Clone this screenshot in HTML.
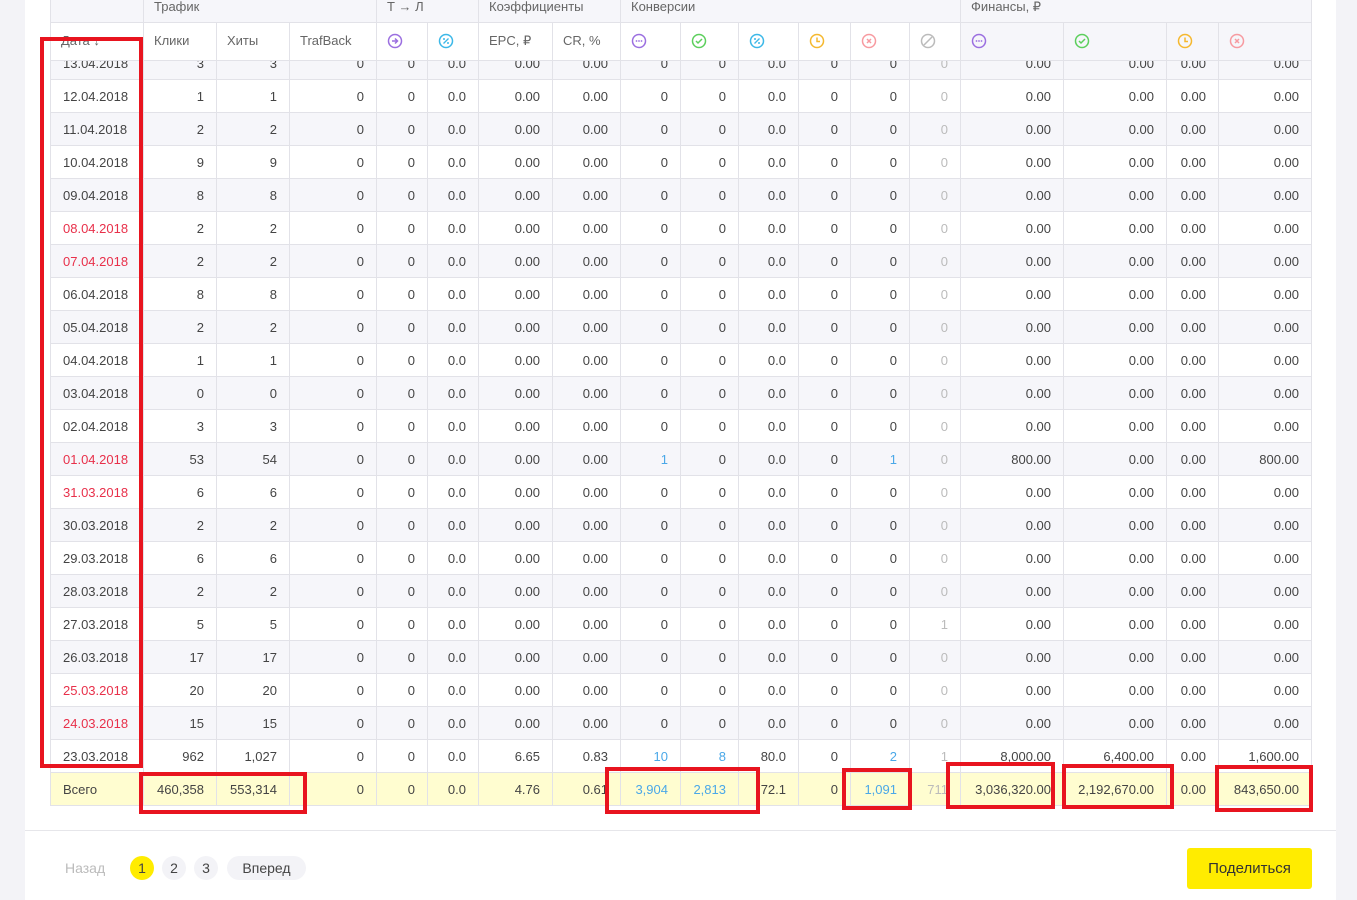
<!DOCTYPE html>
<html><head><meta charset="utf-8"><style>
body{margin:0;width:1357px;height:900px;overflow:hidden;background:#f3f3f7;font-family:"Liberation Sans",sans-serif;font-size:13px;color:#444;position:relative}
.panel{position:absolute;left:25px;top:0;width:1311px;height:900px;background:#fff}
table{border-collapse:collapse;table-layout:fixed;position:absolute;left:50px}
td,th{border:1px solid #e2e2e8;height:32px;padding:0 12px 0 0;text-align:right;white-space:nowrap;overflow:hidden;font-weight:normal}
td:first-child{text-align:left;padding-left:12px}
#data{top:46px}
#data tr:nth-child(odd) td{background:#f6f6fa}
#data tr:nth-child(even) td{background:#fff}
#data tr.tot td{background:#fffdd0}
.r{color:#e8304a}.b{color:#4aa8e8}.g{color:#bbb}
#head{top:-1px;z-index:2}
#head th{text-align:left;padding-left:10px;color:#666;background:#f6f6fa}
#head tr.g1 th{height:22px;vertical-align:top;line-height:14px}
#head tr.g2 th{height:35px;background:#fff;padding-bottom:2px}
#head tr.g2 th.f{background:#f6f6fa}
svg{display:block}
.box{position:absolute;border:4px solid #e8141f;z-index:5}
.pg{position:absolute;top:856px;font-size:14px}
</style></head><body>
<div class="panel"></div>
<div style="position:absolute;left:25px;top:830px;width:1311px;height:1px;background:#e6e6ea"></div>
<table id="data">
<colgroup><col style="width:93px"><col style="width:73px"><col style="width:73px"><col style="width:87px"><col style="width:51px"><col style="width:51px"><col style="width:74px"><col style="width:68px"><col style="width:60px"><col style="width:58px"><col style="width:60px"><col style="width:52px"><col style="width:59px"><col style="width:51px"><col style="width:103px"><col style="width:103px"><col style="width:52px"><col style="width:93px"></colgroup>
<tr><td>13.04.2018</td><td>3</td><td>3</td><td>0</td><td>0</td><td>0.0</td><td>0.00</td><td>0.00</td><td>0</td><td>0</td><td>0.0</td><td>0</td><td>0</td><td class="g">0</td><td>0.00</td><td>0.00</td><td>0.00</td><td>0.00</td></tr>
<tr><td>12.04.2018</td><td>1</td><td>1</td><td>0</td><td>0</td><td>0.0</td><td>0.00</td><td>0.00</td><td>0</td><td>0</td><td>0.0</td><td>0</td><td>0</td><td class="g">0</td><td>0.00</td><td>0.00</td><td>0.00</td><td>0.00</td></tr>
<tr><td>11.04.2018</td><td>2</td><td>2</td><td>0</td><td>0</td><td>0.0</td><td>0.00</td><td>0.00</td><td>0</td><td>0</td><td>0.0</td><td>0</td><td>0</td><td class="g">0</td><td>0.00</td><td>0.00</td><td>0.00</td><td>0.00</td></tr>
<tr><td>10.04.2018</td><td>9</td><td>9</td><td>0</td><td>0</td><td>0.0</td><td>0.00</td><td>0.00</td><td>0</td><td>0</td><td>0.0</td><td>0</td><td>0</td><td class="g">0</td><td>0.00</td><td>0.00</td><td>0.00</td><td>0.00</td></tr>
<tr><td>09.04.2018</td><td>8</td><td>8</td><td>0</td><td>0</td><td>0.0</td><td>0.00</td><td>0.00</td><td>0</td><td>0</td><td>0.0</td><td>0</td><td>0</td><td class="g">0</td><td>0.00</td><td>0.00</td><td>0.00</td><td>0.00</td></tr>
<tr><td class="r">08.04.2018</td><td>2</td><td>2</td><td>0</td><td>0</td><td>0.0</td><td>0.00</td><td>0.00</td><td>0</td><td>0</td><td>0.0</td><td>0</td><td>0</td><td class="g">0</td><td>0.00</td><td>0.00</td><td>0.00</td><td>0.00</td></tr>
<tr><td class="r">07.04.2018</td><td>2</td><td>2</td><td>0</td><td>0</td><td>0.0</td><td>0.00</td><td>0.00</td><td>0</td><td>0</td><td>0.0</td><td>0</td><td>0</td><td class="g">0</td><td>0.00</td><td>0.00</td><td>0.00</td><td>0.00</td></tr>
<tr><td>06.04.2018</td><td>8</td><td>8</td><td>0</td><td>0</td><td>0.0</td><td>0.00</td><td>0.00</td><td>0</td><td>0</td><td>0.0</td><td>0</td><td>0</td><td class="g">0</td><td>0.00</td><td>0.00</td><td>0.00</td><td>0.00</td></tr>
<tr><td>05.04.2018</td><td>2</td><td>2</td><td>0</td><td>0</td><td>0.0</td><td>0.00</td><td>0.00</td><td>0</td><td>0</td><td>0.0</td><td>0</td><td>0</td><td class="g">0</td><td>0.00</td><td>0.00</td><td>0.00</td><td>0.00</td></tr>
<tr><td>04.04.2018</td><td>1</td><td>1</td><td>0</td><td>0</td><td>0.0</td><td>0.00</td><td>0.00</td><td>0</td><td>0</td><td>0.0</td><td>0</td><td>0</td><td class="g">0</td><td>0.00</td><td>0.00</td><td>0.00</td><td>0.00</td></tr>
<tr><td>03.04.2018</td><td>0</td><td>0</td><td>0</td><td>0</td><td>0.0</td><td>0.00</td><td>0.00</td><td>0</td><td>0</td><td>0.0</td><td>0</td><td>0</td><td class="g">0</td><td>0.00</td><td>0.00</td><td>0.00</td><td>0.00</td></tr>
<tr><td>02.04.2018</td><td>3</td><td>3</td><td>0</td><td>0</td><td>0.0</td><td>0.00</td><td>0.00</td><td>0</td><td>0</td><td>0.0</td><td>0</td><td>0</td><td class="g">0</td><td>0.00</td><td>0.00</td><td>0.00</td><td>0.00</td></tr>
<tr><td class="r">01.04.2018</td><td>53</td><td>54</td><td>0</td><td>0</td><td>0.0</td><td>0.00</td><td>0.00</td><td class="b">1</td><td>0</td><td>0.0</td><td>0</td><td class="b">1</td><td class="g">0</td><td>800.00</td><td>0.00</td><td>0.00</td><td>800.00</td></tr>
<tr><td class="r">31.03.2018</td><td>6</td><td>6</td><td>0</td><td>0</td><td>0.0</td><td>0.00</td><td>0.00</td><td>0</td><td>0</td><td>0.0</td><td>0</td><td>0</td><td class="g">0</td><td>0.00</td><td>0.00</td><td>0.00</td><td>0.00</td></tr>
<tr><td>30.03.2018</td><td>2</td><td>2</td><td>0</td><td>0</td><td>0.0</td><td>0.00</td><td>0.00</td><td>0</td><td>0</td><td>0.0</td><td>0</td><td>0</td><td class="g">0</td><td>0.00</td><td>0.00</td><td>0.00</td><td>0.00</td></tr>
<tr><td>29.03.2018</td><td>6</td><td>6</td><td>0</td><td>0</td><td>0.0</td><td>0.00</td><td>0.00</td><td>0</td><td>0</td><td>0.0</td><td>0</td><td>0</td><td class="g">0</td><td>0.00</td><td>0.00</td><td>0.00</td><td>0.00</td></tr>
<tr><td>28.03.2018</td><td>2</td><td>2</td><td>0</td><td>0</td><td>0.0</td><td>0.00</td><td>0.00</td><td>0</td><td>0</td><td>0.0</td><td>0</td><td>0</td><td class="g">0</td><td>0.00</td><td>0.00</td><td>0.00</td><td>0.00</td></tr>
<tr><td>27.03.2018</td><td>5</td><td>5</td><td>0</td><td>0</td><td>0.0</td><td>0.00</td><td>0.00</td><td>0</td><td>0</td><td>0.0</td><td>0</td><td>0</td><td class="g">1</td><td>0.00</td><td>0.00</td><td>0.00</td><td>0.00</td></tr>
<tr><td>26.03.2018</td><td>17</td><td>17</td><td>0</td><td>0</td><td>0.0</td><td>0.00</td><td>0.00</td><td>0</td><td>0</td><td>0.0</td><td>0</td><td>0</td><td class="g">0</td><td>0.00</td><td>0.00</td><td>0.00</td><td>0.00</td></tr>
<tr><td class="r">25.03.2018</td><td>20</td><td>20</td><td>0</td><td>0</td><td>0.0</td><td>0.00</td><td>0.00</td><td>0</td><td>0</td><td>0.0</td><td>0</td><td>0</td><td class="g">0</td><td>0.00</td><td>0.00</td><td>0.00</td><td>0.00</td></tr>
<tr><td class="r">24.03.2018</td><td>15</td><td>15</td><td>0</td><td>0</td><td>0.0</td><td>0.00</td><td>0.00</td><td>0</td><td>0</td><td>0.0</td><td>0</td><td>0</td><td class="g">0</td><td>0.00</td><td>0.00</td><td>0.00</td><td>0.00</td></tr>
<tr><td>23.03.2018</td><td>962</td><td>1,027</td><td>0</td><td>0</td><td>0.0</td><td>6.65</td><td>0.83</td><td class="b">10</td><td class="b">8</td><td>80.0</td><td>0</td><td class="b">2</td><td class="g">1</td><td>8,000.00</td><td>6,400.00</td><td>0.00</td><td>1,600.00</td></tr>
<tr class="tot"><td>Всего</td><td>460,358</td><td>553,314</td><td>0</td><td>0</td><td>0.0</td><td>4.76</td><td>0.61</td><td class="b">3,904</td><td class="b">2,813</td><td>72.1</td><td>0</td><td class="b">1,091</td><td class="g">711</td><td>3,036,320.00</td><td>2,192,670.00</td><td>0.00</td><td>843,650.00</td></tr>
</table>
<table id="head">
<colgroup><col style="width:93px"><col style="width:73px"><col style="width:73px"><col style="width:87px"><col style="width:51px"><col style="width:51px"><col style="width:74px"><col style="width:68px"><col style="width:60px"><col style="width:58px"><col style="width:60px"><col style="width:52px"><col style="width:59px"><col style="width:51px"><col style="width:103px"><col style="width:103px"><col style="width:52px"><col style="width:93px"></colgroup>
<tr class="g1"><th></th><th colspan="3">Трафик</th><th colspan="2">Т → Л</th><th colspan="2">Коэффициенты</th><th colspan="6">Конверсии</th><th colspan="4">Финансы, ₽</th></tr>
<tr class="g2"><th>Дата ↓</th><th>Клики</th><th>Хиты</th><th>TrafBack</th>
<th><svg width="16" height="16"><circle cx="8" cy="8" r="6.5" fill="none" stroke="#9b6fe0" stroke-width="1.5"/><path d="M5 8h5M8 5.5L10.5 8 8 10.5" stroke="#9b6fe0" stroke-width="1.5" fill="none"/></svg></th>
<th><svg width="16" height="16"><circle cx="8" cy="8" r="6.5" fill="none" stroke="#3cb8e8" stroke-width="1.5"/><path d="M5.5 10.5l5-5" stroke="#3cb8e8" stroke-width="1.3"/><circle cx="6" cy="6" r="1" fill="#3cb8e8"/><circle cx="10" cy="10" r="1" fill="#3cb8e8"/></svg></th>
<th>EPC, ₽</th><th>CR, %</th>
<th><svg width="16" height="16"><circle cx="8" cy="8" r="6.5" fill="none" stroke="#9b6fe0" stroke-width="1.5"/><circle cx="5.5" cy="8" r=".9" fill="#9b6fe0"/><circle cx="8" cy="8" r=".9" fill="#9b6fe0"/><circle cx="10.5" cy="8" r=".9" fill="#9b6fe0"/></svg></th>
<th><svg width="16" height="16"><circle cx="8" cy="8" r="6.5" fill="none" stroke="#5ccf5c" stroke-width="1.5"/><path d="M5 8l2 2 4-4" stroke="#5ccf5c" stroke-width="1.5" fill="none"/></svg></th>
<th><svg width="16" height="16"><circle cx="8" cy="8" r="6.5" fill="none" stroke="#3cb8e8" stroke-width="1.5"/><path d="M5.5 10.5l5-5" stroke="#3cb8e8" stroke-width="1.3"/><circle cx="6" cy="6" r="1" fill="#3cb8e8"/><circle cx="10" cy="10" r="1" fill="#3cb8e8"/></svg></th>
<th><svg width="16" height="16"><circle cx="8" cy="8" r="6.5" fill="none" stroke="#f5b82e" stroke-width="1.5"/><path d="M8 4.5V8.5h3" stroke="#f5b82e" stroke-width="1.5" fill="none"/></svg></th>
<th><svg width="16" height="16"><circle cx="8" cy="8" r="6.5" fill="none" stroke="#f79aa0" stroke-width="1.5"/><path d="M6 6l4 4M10 6l-4 4" stroke="#f79aa0" stroke-width="1.5"/></svg></th>
<th><svg width="16" height="16"><circle cx="8" cy="8" r="6.5" fill="none" stroke="#bbb" stroke-width="1.5"/><path d="M4 12L12 4" stroke="#bbb" stroke-width="1.5"/></svg></th>
<th class="f"><svg width="16" height="16"><circle cx="8" cy="8" r="6.5" fill="none" stroke="#9b6fe0" stroke-width="1.5"/><circle cx="5.5" cy="8" r=".9" fill="#9b6fe0"/><circle cx="8" cy="8" r=".9" fill="#9b6fe0"/><circle cx="10.5" cy="8" r=".9" fill="#9b6fe0"/></svg></th>
<th class="f"><svg width="16" height="16"><circle cx="8" cy="8" r="6.5" fill="none" stroke="#5ccf5c" stroke-width="1.5"/><path d="M5 8l2 2 4-4" stroke="#5ccf5c" stroke-width="1.5" fill="none"/></svg></th>
<th class="f"><svg width="16" height="16"><circle cx="8" cy="8" r="6.5" fill="none" stroke="#f5b82e" stroke-width="1.5"/><path d="M8 4.5V8.5h3" stroke="#f5b82e" stroke-width="1.5" fill="none"/></svg></th>
<th class="f"><svg width="16" height="16"><circle cx="8" cy="8" r="6.5" fill="none" stroke="#f79aa0" stroke-width="1.5"/><path d="M6 6l4 4M10 6l-4 4" stroke="#f79aa0" stroke-width="1.5"/></svg></th>
</tr></table>
<div class="box" style="left:40px;top:37px;width:95px;height:723px"></div>
<div class="box" style="left:139px;top:772px;width:160px;height:34px"></div>
<div class="box" style="left:605px;top:767px;width:147px;height:39px"></div>
<div class="box" style="left:842px;top:768px;width:62px;height:34px"></div>
<div class="box" style="left:946px;top:762px;width:101px;height:39px"></div>
<div class="box" style="left:1062px;top:764px;width:104px;height:37px"></div>
<div class="box" style="left:1215px;top:765px;width:90px;height:39px"></div>
<div class="pg" style="left:65px;top:860px;color:#bbb">Назад</div>
<div class="pg" style="left:130px;width:24px;height:24px;border-radius:12px;background:#ffec00;text-align:center;line-height:24px">1</div>
<div class="pg" style="left:162px;width:24px;height:24px;border-radius:12px;background:#f3f3f7;text-align:center;line-height:24px">2</div>
<div class="pg" style="left:194px;width:24px;height:24px;border-radius:12px;background:#f3f3f7;text-align:center;line-height:24px">3</div>
<div class="pg" style="left:227px;width:79px;height:24px;border-radius:12px;background:#f3f3f7;text-align:center;line-height:24px">Вперед</div>
<div style="position:absolute;left:1187px;top:848px;width:125px;height:41px;background:#ffec00;border-radius:3px;text-align:center;line-height:41px;font-size:15px;color:#333">Поделиться</div>
</body></html>
